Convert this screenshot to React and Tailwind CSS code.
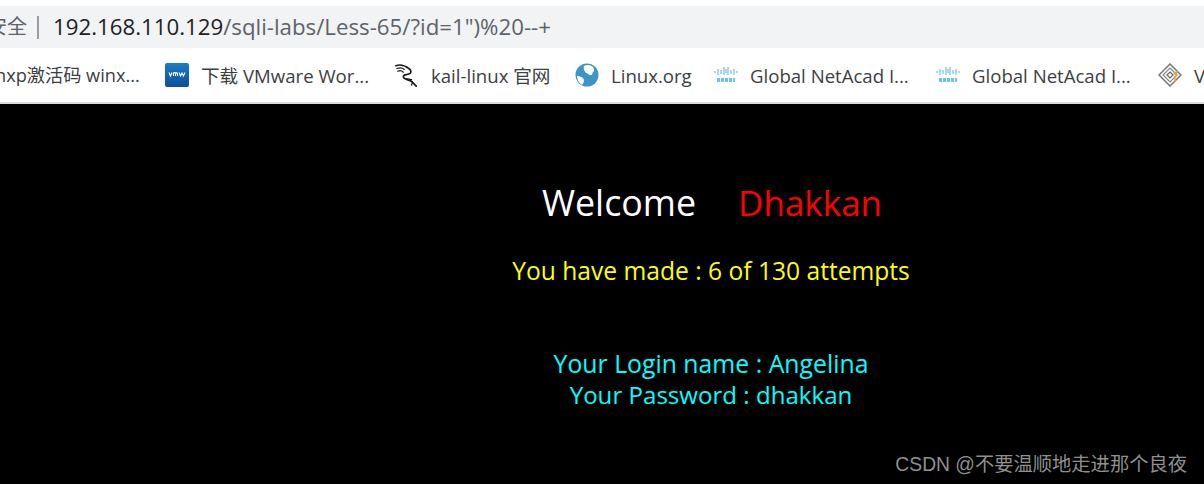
const sans = "font-['Open_Sans','Noto_Sans_CJK_SC',sans-serif]";

function VmwIcon() {
    return (
        <svg width="24" height="24" viewBox="0 0 24 24">
            <defs>
                <linearGradient id="vmw" x1="0" y1="0" x2="0" y2="1">
                    <stop offset="0" stopColor="#1a7cc4" />
                    <stop offset="1" stopColor="#0b4f9a" />
                </linearGradient>
            </defs>
            <rect width="24" height="24" rx="2" fill="url(#vmw)" />
            <path d="M2 9.500l1.500 3.500 1.500-3.500M6.500 13v-3.500M6.500 10q2-1 2 .5v2.500M8.500 10.500q2-1.500 2 .5v2M12 9.500l1.500 3.500 1.500-3 1.500 3 1.500-3.500" fill="none" stroke="#fff" strokeWidth="1.100" transform="translate(2 0)" />
        </svg>
    );
}

function KaliIcon() {
    return (
        <svg width="26" height="26" viewBox="0 0 26 26" fill="none" stroke="#1a1a1a" strokeLinecap="round">
            <path d="M1 3c5-2 10 0 14 3 3 2 3 5 0 6-3 1-6 0-6 3 0 3 6 3 9 5l5 5" strokeWidth="1.800" />
            <path d="M2 6c3-1 6-1 8 1M3 9c2-1 4-1 6 1M12 17l6 1M19 20l-1 4" strokeWidth="1.300" />
        </svg>
    );
}

function GlobeIcon() {
    return (
        <svg width="24" height="24" viewBox="0 0 24 24">
            <circle cx="12" cy="12" r="11.500" fill="#3d94c8" />
            <path d="M9 3c3-2 7-1 9 1 1 2 2 4 0 5-1 1 0 3-2 3-2 1-3-2-5-2-1-2-3-3-2-7zM2 13c3 0 6 1 7 4 0 2-1 4-2 5-3-2-5-5-5-9z" fill="#fff" />
        </svg>
    );
}

function CiscoIcon() {
    return (
        <svg width="24" height="20" viewBox="0 0 24 20" fill="none" stroke="#6cc4e4">
            <path d="M1 6v2M4 4v6M7 5v4M10 2v8M12 4v4M14 2v8M17 5v4M20 4v6M23 6v2" strokeWidth="1.200" />
            <path d="M3 15h18" strokeWidth="4" strokeDasharray="3 1" />
        </svg>
    );
}

function BoxIcon() {
    return (
        <svg width="24" height="24" viewBox="0 0 24 24" fill="none">
            <path d="M12 1l11 11-11 11L1 12z" stroke="#777" strokeWidth="1.500" />
            <path d="M12 5l7 7-7 7-7-7z" stroke="#888" strokeWidth="1.200" />
            <path d="M12 9l3 3-3 3-3-3z" stroke="#666" strokeWidth="1.200" />
            <path d="M16 10l3-1-1 3zM17 13v6" stroke="#f0a040" strokeWidth="1.500" />
        </svg>
    );
}

const bookmarks = [
    { icon: <VmwIcon />, label: "下载 VMware Wor...", width: "w-[169px]" },
    { icon: <KaliIcon />, label: "kail-linux 官网", width: "w-[119px]" },
    { icon: <GlobeIcon />, label: "Linux.org", width: "w-[78px]" },
    { icon: <CiscoIcon />, label: "Global NetAcad I...", width: "w-[161px]" },
    { icon: <CiscoIcon />, label: "Global NetAcad I...", width: "w-[161px]" },
    { icon: <BoxIcon />, label: "VMware", width: "w-[80px]" },
];

export default function App() {
    return (
        <div className={`relative w-[1204px] h-[484px] overflow-hidden bg-black ${sans}`}>
            <div className="bg-white pt-[6px]">
                {/* address bar */}
                <div className="h-[42px] bg-[#f1f3f4] flex items-center overflow-hidden -ml-[13px]">
                    <span className="text-[20px] text-[#5f6368] whitespace-nowrap">安全</span>
                    <span className="w-[2px] h-[23px] bg-[#9a9c9f] ml-[10px]" />
                    <span className="text-[22.25px] ml-[14px] whitespace-nowrap text-[#202124]">
                        192.168.110.129<span className="text-[#5f6368]">/sqli-labs/Less-65/?id=1")%20--+</span>
                    </span>
                </div>

                {/* bookmarks */}
                <div className="h-[54px] pt-[1px] flex items-center overflow-hidden whitespace-nowrap text-[18.6px] text-[#3c4043] -ml-[5px]">
                    <span className="w-[170px] shrink-0 text-[18.2px]">nxp激活码 winx...</span>
                    {bookmarks.map((b, i) => (
                        <div key={i} className="flex items-center shrink-0 mr-[25px]">
                            <span className="w-[24px] flex justify-center mr-[12px]">{b.icon}</span>
                            <span className={b.width}>{b.label}</span>
                        </div>
                    ))}
                </div>
                <div className="h-[2px] bg-[#dadce0]" />
            </div>

            {/* page body */}
            <div className="text-center pl-[220px]">
                <div className="mt-[73px] text-[35.8px] leading-[50px] text-white">
                    Welcome<span className="ml-[42px] text-[35px] text-[#ff0000]">Dhakkan</span>
                </div>
                <div className="mt-[27px] pr-[2px] text-[24.6px] leading-[31px] text-[#ffff00]">You have made : 6 of 130 attempts</div>
                <div className="mt-[62px] pr-[2px] text-[24.8px] leading-[31px] text-[#00ffff]">
                    <div>Your Login name : Angelina</div>
                    <div className="text-[24.1px]">Your Password : dhakkan</div>
                </div>
            </div>

            {/* watermark */}
            <div className="absolute right-[17px] top-[452px] text-[19.3px] leading-[26px] text-[#8f8f8f] font-['Liberation_Sans','Noto_Sans_CJK_SC',sans-serif]">
                CSDN @不要温顺地走进那个良夜
            </div>
        </div>
    );
}
